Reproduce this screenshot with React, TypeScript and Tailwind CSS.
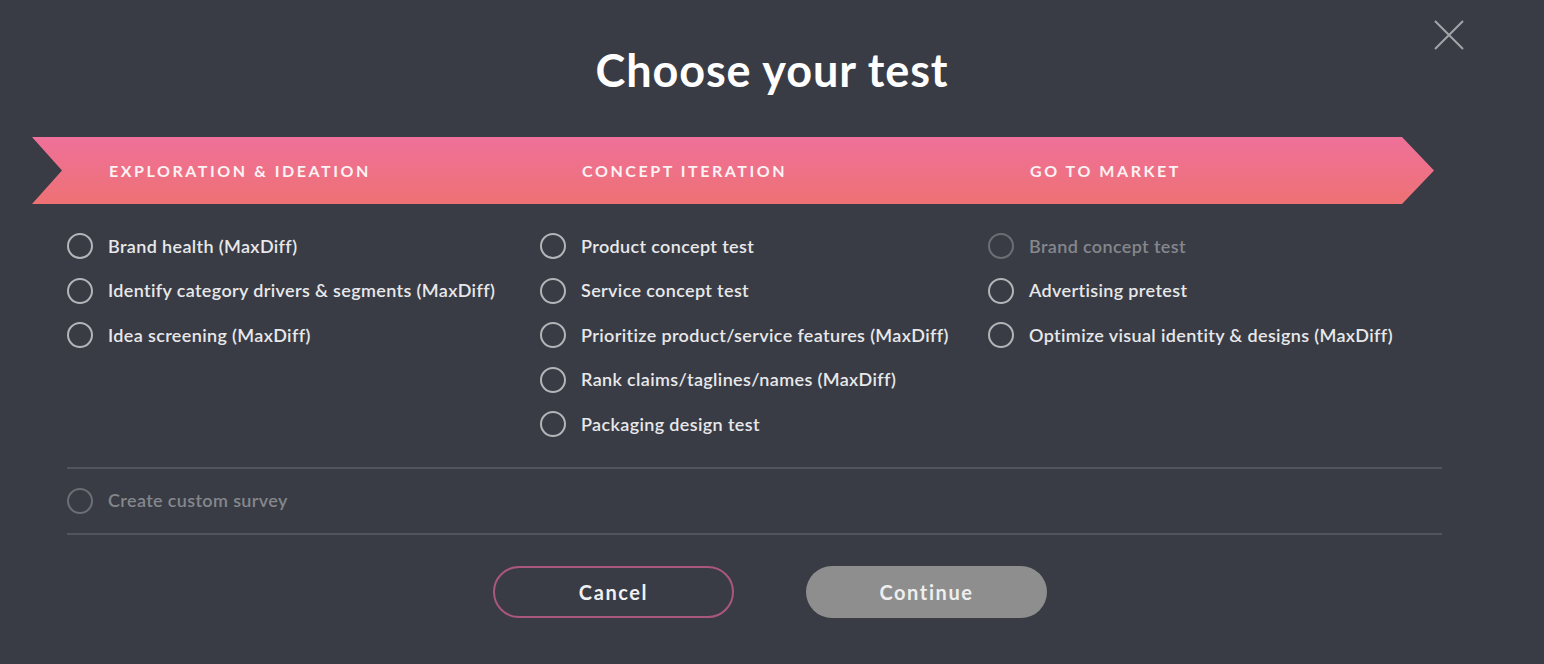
import { useState } from "react";

type Item = { label: string; disabled?: boolean };

const columns: { title: string; items: Item[] }[] = [
  {
    title: "Exploration & Ideation",
    items: [
      { label: "Brand health (MaxDiff)" },
      { label: "Identify category drivers & segments (MaxDiff)" },
      { label: "Idea screening (MaxDiff)" },
    ],
  },
  {
    title: "Concept Iteration",
    items: [
      { label: "Product concept test" },
      { label: "Service concept test" },
      { label: "Prioritize product/service features (MaxDiff)" },
      { label: "Rank claims/taglines/names (MaxDiff)" },
      { label: "Packaging design test" },
    ],
  },
  {
    title: "Go to Market",
    items: [
      { label: "Brand concept test", disabled: true },
      { label: "Advertising pretest" },
      { label: "Optimize visual identity & designs (MaxDiff)" },
    ],
  },
];

const Radio = ({
  label,
  disabled,
  checked,
  onClick,
}: Item & { checked: boolean; onClick: () => void }) => (
  <button
    type="button"
    onClick={disabled ? undefined : onClick}
    className="flex h-[44.5px] items-center gap-[15px] text-left"
  >
    <span
      className={`flex h-[26px] w-[26px] shrink-0 items-center justify-center rounded-full border-2 ${
        disabled ? "border-[#6c6e74]" : "border-[#b4b5b9]"
      }`}
    >
      {checked && <span className="h-[12px] w-[12px] rounded-full bg-[#ef7187]" />}
    </span>
    <span
      className={`text-[18px] font-semibold tracking-[0.02em] ${
        disabled ? "text-[#85878c]" : "text-[#e8e8ea]"
      }`}
    >
      {label}
    </span>
  </button>
);

export default function App() {
  const [selected, setSelected] = useState<string | null>(null);

  return (
    <div
      className="relative flex h-[664px] w-full flex-col overflow-hidden bg-[#393c45]"
      style={{ fontFamily: 'Lato, "Open Sans", sans-serif' }}
    >
      <button type="button" className="absolute right-[80px] top-[20px] h-[30px] w-[30px]">
        <svg viewBox="0 0 30 30" className="h-full w-full" fill="none" stroke="#a3a5a9" strokeWidth="2">
          <path d="M1 1L29 29M29 1L1 29" />
        </svg>
      </button>

      <h1 className="mt-[44px] text-center text-[45px] font-bold leading-[52px] tracking-[0.02em] text-white">
        Choose your test
      </h1>

      <div className="ml-[32px] mt-[41px] h-[67px] w-[1402px] bg-gradient-to-b from-[#ef7099] to-[#ee7174] [clip-path:polygon(0_0,calc(100%-32px)_0,100%_50%,calc(100%-32px)_100%,0_100%,30px_50%)]">
        <div className="grid h-full grid-cols-[473px_448px_1fr] items-center pl-[35px]">
          {columns.map((c) => (
            <div
              key={c.title}
              className="pl-[42px] text-[16px] font-bold uppercase tracking-[0.16em] text-[#fdf2f4]"
            >
              {c.title}
            </div>
          ))}
        </div>
      </div>

      <div className="ml-[67px] mr-[102px] flex flex-col">
        <div className="grid grid-cols-[473px_448px_1fr] pb-[20px] pt-[20px]">
          {columns.map((c) => (
            <div key={c.title} className="flex flex-col">
              {c.items.map((it) => (
                <Radio
                  key={it.label}
                  {...it}
                  checked={selected === it.label}
                  onClick={() => setSelected(it.label)}
                />
              ))}
            </div>
          ))}
        </div>

        <div className="flex flex-col border-y-2 border-[#52555d] py-[10px]">
          <Radio
            label="Create custom survey"
            disabled
            checked={false}
            onClick={() => {}}
          />
        </div>

        <div className="mt-[31px] flex justify-center gap-[72px] pl-[31px]">
          <button
            type="button"
            className="h-[52px] w-[241px] rounded-full border-2 border-[#a9577a] text-[20px] font-bold tracking-[0.08em] text-[#f1f1f3]"
          >
            Cancel
          </button>
          <button
            type="button"
            disabled={!selected}
            className={`h-[52px] w-[241px] rounded-full text-[20px] font-bold tracking-[0.08em] text-[#eeeeee] ${
              selected ? "bg-[#ef7187]" : "bg-[#8e8e8e]"
            }`}
          >
            Continue
          </button>
        </div>
      </div>
    </div>
  );
}
